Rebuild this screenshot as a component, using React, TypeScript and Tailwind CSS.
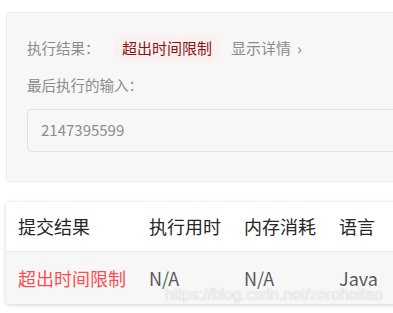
export default function App() {
  const font = { fontFamily: '"Noto Sans CJK SC", "Noto Sans", sans-serif' };

  return (
    <div className="w-[393px] h-[313px] overflow-hidden bg-white relative" style={font}>
      {/* result panel */}
      <div className="ml-[6px] mt-[12px] w-[400px] h-[170px] rounded-[4px] border border-[#ebebeb] bg-[#f7f7f7] pl-[20px] pt-[21px]">
        <div className="flex items-center h-[28px] text-[14.5px]">
          <span className="text-[#8c8c8c] w-[86px]">执行结果：</span>
          <span className="rounded-full bg-[#fbf1f1] px-[9px] h-[28px] flex items-center text-[15px] text-[#8f1212]">
            超出时间限制
          </span>
          <span className="ml-[10px] text-[#8c8c8c] text-[15px] flex items-center">
            显示详情
            <span className="ml-[6px] text-[16px] leading-none">›</span>
          </span>
        </div>
        <div className="mt-[12px] text-[14.5px] text-[#8c8c8c] leading-[22px]">最后执行的输入：</div>
        <div className="mt-[13px] h-[43px] rounded-[4px] border border-[#e3e3e3] bg-[#f7f7f7] flex items-center pl-[13px] text-[15px] text-[#8c8c8c]">
          2147395599
        </div>
      </div>

      {/* submissions table */}
      <div className="ml-[6px] mt-[20px] w-[400px] rounded-[3px] bg-white shadow-[0_1px_4px_rgba(0,0,0,0.18)] overflow-hidden">
        <div className="flex items-center h-[50px] border-b border-[#ebebeb] text-[18px] text-[#262626]">
          <span className="pl-[12px] w-[143px]">提交结果</span>
          <span className="w-[95px]">执行用时</span>
          <span className="w-[95px]">内存消耗</span>
          <span>语言</span>
        </div>
        <div className="flex items-center h-[52px] bg-[#f7f7f7] text-[18px] text-[#595959]">
          <span className="pl-[12px] w-[143px] text-[#ff4d4f]">超出时间限制</span>
          <span className="w-[95px]">N/A</span>
          <span className="w-[95px]">N/A</span>
          <span>Java</span>
        </div>
      </div>

      {/* watermark */}
      <div
        className="absolute left-[165px] top-[285px] whitespace-nowrap text-[15.7px] leading-[20px] text-white/85 [text-shadow:0_0_1px_rgba(0,0,0,0.3)]"
        style={{ fontFamily: '"Liberation Sans", Arial, sans-serif' }}
      >
        https://blog.csdn.net/zeroheitao
      </div>
    </div>
  );
}
